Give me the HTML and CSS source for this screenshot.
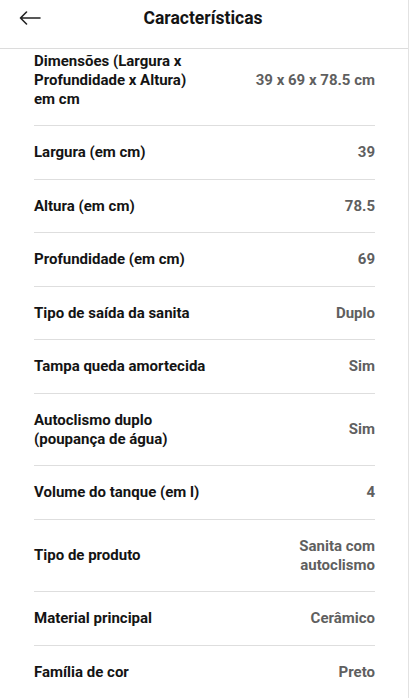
FILE: index.html
```html
<!DOCTYPE html>
<html lang="pt">
<head>
<meta charset="utf-8">
<title>Características</title>
<link rel="stylesheet" href="styles.css">
</head>
<body>
<div class="screen">
  <header class="topbar">
    <button class="back" aria-label="Voltar">
      <svg width="22" height="14" viewBox="0 0 22 14" fill="none" stroke="#222" stroke-width="1.6" stroke-linecap="round" stroke-linejoin="round"><path d="M21 7H1.5M7.5 1L1.5 7l6 6"/></svg>
    </button>
    <h1 class="title">Características</h1>
    <span class="spacer"></span>
  </header>
  <main class="viewport">
    <ul class="specs">
      <li class="row"><span class="label">Dimensões (Largura x Profundidade x Altura) em cm</span><span class="value">39 x 69 x 78.5 cm</span></li>
      <li class="row"><span class="label">Largura (em cm)</span><span class="value">39</span></li>
      <li class="row"><span class="label">Altura (em cm)</span><span class="value">78.5</span></li>
      <li class="row"><span class="label">Profundidade (em cm)</span><span class="value">69</span></li>
      <li class="row"><span class="label">Tipo de saída da sanita</span><span class="value">Duplo</span></li>
      <li class="row"><span class="label">Tampa queda amortecida</span><span class="value">Sim</span></li>
      <li class="row"><span class="label">Autoclismo duplo (poupança de água)</span><span class="value">Sim</span></li>
      <li class="row"><span class="label">Volume do tanque (em l)</span><span class="value">4</span></li>
      <li class="row"><span class="label">Tipo de produto</span><span class="value">Sanita com<br>autoclismo</span></li>
      <li class="row"><span class="label">Material principal</span><span class="value">Cerâmico</span></li>
      <li class="row"><span class="label">Família de cor</span><span class="value">Preto</span></li>
    </ul>
  </main>
</div>
</body>
</html>
```

FILE: styles.css
```css
* { box-sizing: border-box; }
html, body { margin: 0; padding: 0; background: #fff; }
body {
  font-family: Roboto, "Liberation Sans", sans-serif;
  color: #1a1a1a;
  width: 410px;
  height: 698px;
  overflow: hidden;
}
.screen {
  width: 409px;
  height: 698px;
  border-right: 1px solid #e2e2e2;
  display: flex;
  flex-direction: column;
}
.topbar {
  height: 49px;
  flex: 0 0 49px;
  border-bottom: 1px solid #dcdcdc;
  display: flex;
  align-items: flex-start;
  padding: 6px 14px 0 17px;
  background: #fff;
  position: relative;
  z-index: 1;
}
.back {
  border: 0;
  background: none;
  padding: 5px 2px;
  width: 40px;
  display: flex;
  justify-content: flex-start;
  cursor: pointer;
}
.title {
  flex: 1;
  margin: 0;
  text-align: center;
  font-size: 17.5px;
  font-weight: 700;
  line-height: 24px;
  letter-spacing: 0;
  padding-right: 5px;
  color: #141414;
}
.spacer { width: 40px; }
.viewport {
  flex: 1;
  overflow: hidden;
}
.specs {
  list-style: none;
  margin: -14.5px 0 0;
  padding: 0 33px 0 34px;
}
.row {
  display: flex;
  justify-content: space-between;
  align-items: center;
  gap: 16px;
  padding: 17px 0 16.5px;
  border-bottom: 1px solid #dedede;
  font-size: 15px;
  line-height: 19px;
  font-weight: 700;
  letter-spacing: 0;
}
.label {
  flex: 0 1 172px;
  color: #141414;
}
.value {
  text-align: right;
  color: #5f5f5f;
  font-weight: 700;
}
```
